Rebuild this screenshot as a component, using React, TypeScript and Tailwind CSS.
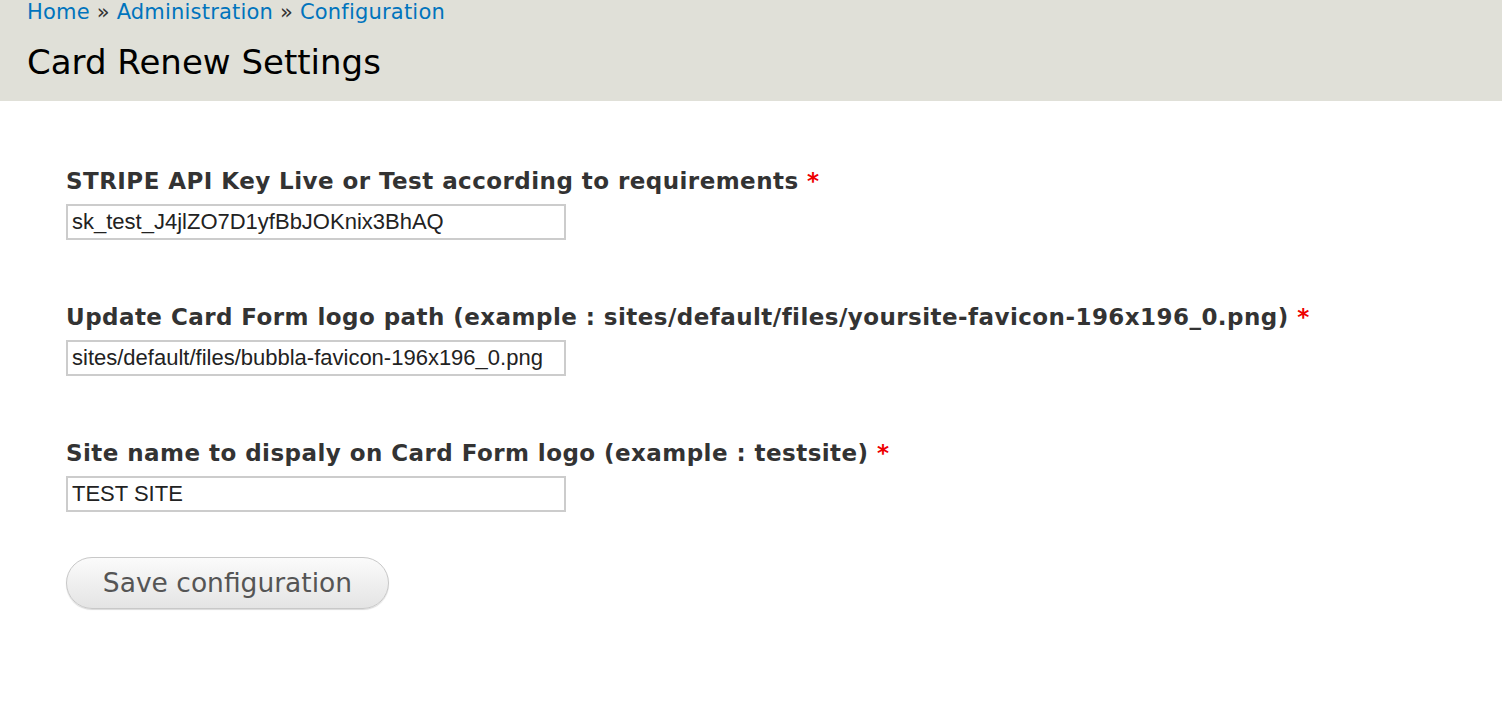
import { useState } from 'react'

type Field = {
  id: string
  label: string
  value: string
}

const fields: Field[] = [
  {
    id: 'stripe-key',
    label: 'STRIPE API Key Live or Test according to requirements',
    value: 'sk_test_J4jlZO7D1yfBbJOKnix3BhAQ',
  },
  {
    id: 'logo-path',
    label: 'Update Card Form logo path (example : sites/default/files/yoursite-favicon-196x196_0.png)',
    value: 'sites/default/files/bubbla-favicon-196x196_0.png',
  },
  {
    id: 'site-name',
    label: 'Site name to dispaly on Card Form logo (example : testsite)',
    value: 'TEST SITE',
  },
]

function TextField({ field }: { field: Field }) {
  const [value, setValue] = useState(field.value)
  return (
    <div className="flex flex-col">
      <label
        htmlFor={field.id}
        className="text-[23px] leading-[28px] tracking-[0.45px] font-bold text-[#333]"
      >
        {field.label}{' '}
        <span className="text-[#e00] font-bold">*</span>
      </label>
      <input
        id={field.id}
        value={value}
        onChange={(e) => setValue(e.target.value)}
        className="mt-[9px] w-[500px] h-[36px] border-2 border-[#ccc] px-[4px] text-[22px] text-[#222] outline-none font-['Liberation_Sans',Arial,sans-serif]"
      />
    </div>
  )
}

export default function App() {
  return (
    <main className="min-h-screen bg-white font-['DejaVu_Sans',sans-serif]">
      {/* Header with breadcrumb and page title */}
      <header className="bg-[#e0e0d8] h-[101px] px-[27px]">
        <nav className="text-[21px] leading-[24px] tracking-[0.2px] text-[#0074bd]">
          <a href="#">Home</a>
          <span className="text-[#333]"> » </span>
          <a href="#">Administration</a>
          <span className="text-[#333]"> » </span>
          <a href="#">Configuration</a>
        </nav>
        <h1 className="mt-[18px] text-[34px] leading-[40px] text-black">Card Renew Settings</h1>
      </header>

      {/* Settings form */}
      <form className="px-[66px] pt-[66px]">
        <div className="flex flex-col gap-[63px]">
          {fields.map((f) => (
            <TextField key={f.id} field={f} />
          ))}
        </div>
        <button
          type="button"
          className="mt-[45px] w-[323px] h-[52px] rounded-full border border-[#c8c8c8] bg-gradient-to-b from-[#fbfbfb] to-[#e4e4e4] text-[26.5px] text-[#555] shadow-[0_1px_1px_rgba(0,0,0,0.15)]"
        >
          Save configuration
        </button>
      </form>
    </main>
  )
}
